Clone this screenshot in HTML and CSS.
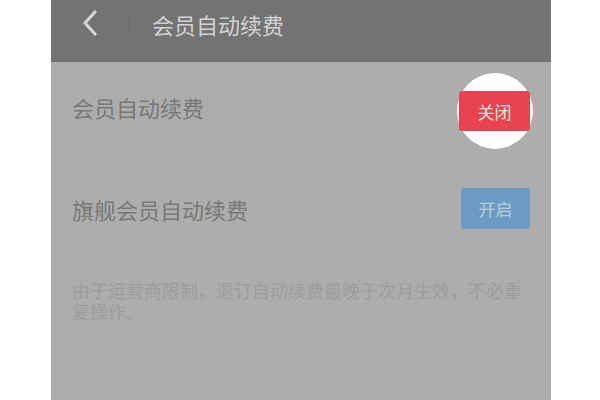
FILE: index.html
```html
<!DOCTYPE html>
<html lang="zh-CN">
<head>
<meta charset="utf-8">
<link rel="stylesheet" href="styles.css">
</head>
<body>
<div class="phone">
  <header class="topbar">
    <svg class="back" width="16" height="26" viewBox="0 0 16 26"><path d="M13 2 L3 13 L13 24" fill="none" stroke="#d6d6d6" stroke-width="3.2" stroke-linecap="round" stroke-linejoin="round"/></svg>
    <span class="divider"></span>
    <span class="title">会员自动续费</span>
  </header>
  <div class="list">
    <div class="row row-first">
      <span class="label">会员自动续费</span>
      <span class="btn-wrap">
        <span class="halo"></span>
        <span class="btn btn-off">关闭</span>
      </span>
    </div>
    <div class="row">
      <span class="label">旗舰会员自动续费</span>
      <span class="btn btn-on">开启</span>
    </div>
    <p class="note">由于运营商限制，退订自动续费最晚于次月生效，不必重复操作。</p>
  </div>
</div>
</body>
</html>
```
FILE: styles.css
```css
html, body {
  margin: 0;
  padding: 0;
  background: #ffffff;
}
body {
  font-family: "Noto Sans CJK SC", "Noto Sans", sans-serif;
}
.phone {
  margin-left: 51px;
  width: 500px;
  height: 400px;
  background: #adadad;
  overflow: hidden;
}
.topbar {
  height: 62px;
  background: #737373;
  display: flex;
  align-items: flex-start;
  box-sizing: border-box;
  padding-left: 31px;
  padding-top: 10px;
  border-bottom: 1px solid #6e6e6e;
}
.back {
  display: block;
}
.divider {
  width: 1px;
  height: 23px;
  background: #6c6c6c;
  margin-left: 30px;
  margin-top: 2px;
}
.title {
  margin-left: 23px;
  font-size: 22px;
  color: #d2d2d2;
  line-height: 1;
  margin-top: 3px;
}
.list {
  padding: 0 21px;
}
.row {
  height: 98px;
  display: flex;
  align-items: center;
  justify-content: space-between;
}
.label {
  font-size: 22px;
  color: #787878;
  line-height: 1;
  margin-top: -8px;
}
.row + .row .label {
  margin-top: 0;
}
.btn-wrap {
  position: relative;
  display: inline-flex;
}
.halo {
  position: absolute;
  left: 50%;
  top: 50%;
  width: 76px;
  height: 76px;
  margin-left: -38px;
  margin-top: -38px;
  border-radius: 50%;
  background: #ffffff;
}
.btn {
  position: relative;
  width: 71px;
  height: 40px;
  border-radius: 3px;
  display: inline-flex;
  align-items: center;
  justify-content: center;
  font-size: 17px;
  line-height: 1;
}
.btn-off {
  background: #e8434f;
  color: #fbe3e4;
}
.btn-on {
  width: 69px;
  height: 41px;
  background: #6b9bc3;
  color: #b9cde0;
  margin-top: -2px;
}
.note {
  margin: 22px 0 0;
  font-size: 18px;
  line-height: 21px;
  color: #9d9d9d;
  padding-right: 6px;
}
```
